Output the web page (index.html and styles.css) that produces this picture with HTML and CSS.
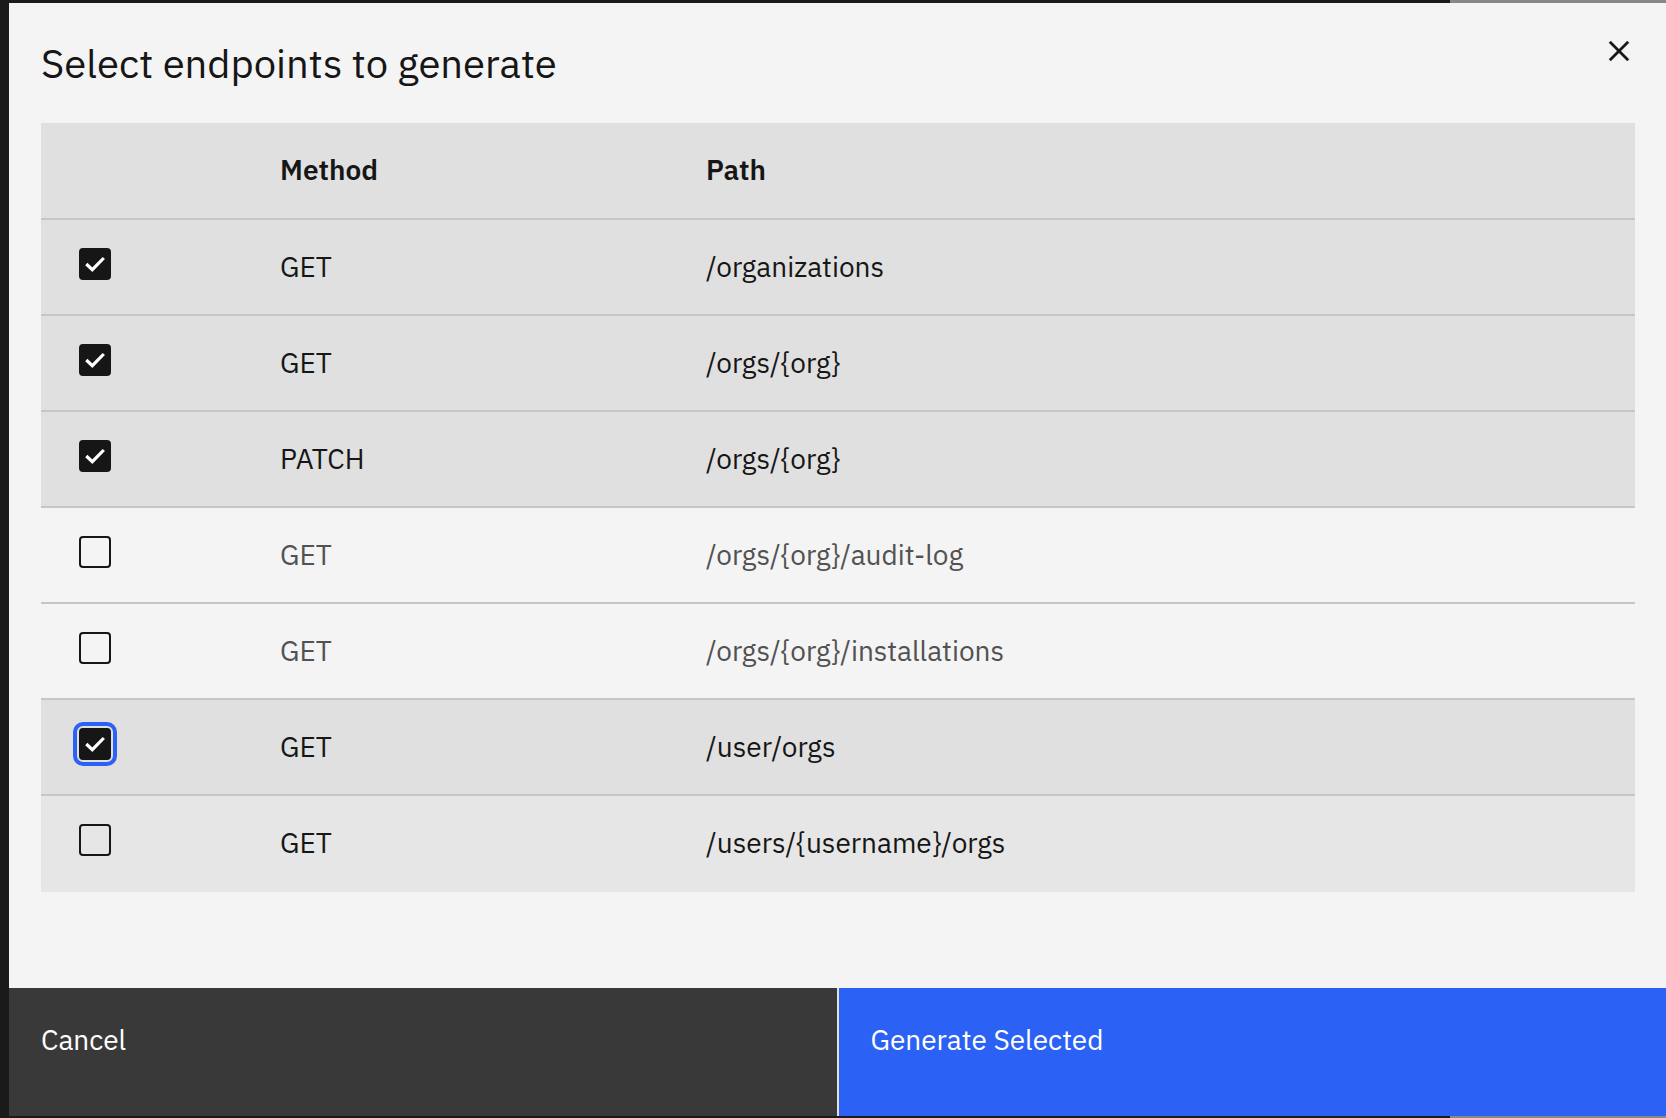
FILE: index.html
```html
<!DOCTYPE html>
<html lang="en">
<head>
<meta charset="utf-8">
<title>Select endpoints to generate</title>
<link rel="stylesheet" href="styles.css">
</head>
<body>
<svg class="sprite" aria-hidden="true">
  <symbol id="check" viewBox="0 0 32 32"><path d="M7.3 16 13.3 21.7 24.8 10" fill="none" stroke="#fff" stroke-width="3.2"/></symbol>
</svg>
<main class="modal" role="dialog" aria-labelledby="modal-title">
  <header class="modal-header">
    <h1 class="modal-title" id="modal-title">Select endpoints to generate</h1>
    <button class="close" type="button" aria-label="Close">
      <svg class="close-icon" viewBox="0 0 32 32" aria-hidden="true"><path fill="currentColor" stroke="currentColor" stroke-width=".3" d="M24 9.4 22.6 8 16 14.6 9.4 8 8 9.4 14.6 16 8 22.6 9.4 24 16 17.4 22.6 24 24 22.6 17.4 16z"/></svg>
    </button>
  </header>
  <div class="modal-content">
    <table class="endpoints">
      <thead>
        <tr><th class="col-select"></th><th class="col-method" scope="col">Method</th><th scope="col">Path</th></tr>
      </thead>
      <tbody>
        <tr class="selected">
          <td><label class="check"><input type="checkbox" aria-label="GET /organizations" checked><svg aria-hidden="true"><use href="#check"/></svg></label></td>
          <td>GET</td><td>/organizations</td>
        </tr>
        <tr class="selected">
          <td><label class="check"><input type="checkbox" aria-label="GET /orgs/{org}" checked><svg aria-hidden="true"><use href="#check"/></svg></label></td>
          <td>GET</td><td>/orgs/{org}</td>
        </tr>
        <tr class="selected">
          <td><label class="check"><input type="checkbox" aria-label="PATCH /orgs/{org}" checked><svg aria-hidden="true"><use href="#check"/></svg></label></td>
          <td>PATCH</td><td>/orgs/{org}</td>
        </tr>
        <tr>
          <td><label class="check"><input type="checkbox" aria-label="GET /orgs/{org}/audit-log"><svg aria-hidden="true"><use href="#check"/></svg></label></td>
          <td>GET</td><td>/orgs/{org}/audit-log</td>
        </tr>
        <tr>
          <td><label class="check"><input type="checkbox" aria-label="GET /orgs/{org}/installations"><svg aria-hidden="true"><use href="#check"/></svg></label></td>
          <td>GET</td><td>/orgs/{org}/installations</td>
        </tr>
        <tr class="selected">
          <td><label class="check focused"><input type="checkbox" aria-label="GET /user/orgs" checked><svg aria-hidden="true"><use href="#check"/></svg></label></td>
          <td>GET</td><td>/user/orgs</td>
        </tr>
        <tr class="hovered">
          <td><label class="check"><input type="checkbox" aria-label="GET /users/{username}/orgs"><svg aria-hidden="true"><use href="#check"/></svg></label></td>
          <td>GET</td><td>/users/{username}/orgs</td>
        </tr>
      </tbody>
    </table>
  </div>
  <footer class="modal-footer">
    <button class="action secondary" type="button">Cancel</button>
    <button class="action primary" type="button">Generate Selected</button>
  </footer>
</main>
</body>
</html>
```
FILE: styles.css
```css
* {
  box-sizing: border-box;
}

body {
  margin: 0;
  min-height: 100vh;
  padding: 3px 0 2px 9px;
  display: flex;
  flex-direction: column;
  font-family: "IBM Plex Sans", "Open Sans", sans-serif;
  font-size: 28px;
  line-height: 36px;
  color: #161616;
  background: linear-gradient(to right, #1a1a1a calc(100% - 216px), #888 calc(100% - 216px));
}

.sprite {
  display: none;
}

.modal {
  flex: 1;
  display: flex;
  flex-direction: column;
  background: #f4f4f4;
}

.modal-header {
  display: flex;
  justify-content: space-between;
  align-items: flex-start;
  padding-left: 32px;
}

.modal-title {
  margin: 0;
  padding: 32px 0;
  font-size: 40px;
  font-weight: 400;
  line-height: 56px;
}

.close {
  display: grid;
  place-items: center;
  width: 94px;
  height: 96px;
  padding: 0;
  border: 0;
  background: none;
  color: inherit;
}

.close-icon {
  width: 40px;
  height: 40px;
}

.modal-content {
  flex: 1;
  padding: 0 31px 48px 32px;
}

.endpoints {
  width: 100%;
  table-layout: fixed;
  border-collapse: separate;
  border-spacing: 0;
  text-align: left;
}

.col-select {
  width: 207px;
}

.col-method {
  width: 426px;
}

.endpoints th,
.endpoints td {
  height: 96px;
  padding: 0 32px;
  border-bottom: 2px solid #c6c6c6;
}

.endpoints th {
  height: 97px;
  padding-bottom: 2px;
  background: #e0e0e0;
  font-weight: 600;
}

.endpoints td {
  color: #525252;
}

.endpoints .selected td {
  background: #e0e0e0;
  color: #161616;
}

.endpoints .hovered td {
  background: #e6e6e6;
  border-color: #e6e6e6;
  color: #161616;
}

.endpoints td:first-child {
  padding: 28px 38px 0;
  vertical-align: top;
}

.check {
  display: grid;
  width: 32px;
  height: 32px;
}

.check input,
.check svg {
  grid-area: 1 / 1;
  width: 32px;
  height: 32px;
  margin: 0;
}

.check input {
  appearance: none;
  border: 2px solid #161616;
  border-radius: 4px;
}

.check input:checked {
  background: #161616;
}

.check svg {
  visibility: hidden;
  pointer-events: none;
}

.check input:checked + svg {
  visibility: visible;
}

.check.focused input {
  outline: 4px solid #2c61f5;
  outline-offset: 2px;
}

.modal-footer {
  display: flex;
  gap: 2px;
  background: #e0e0e0;
}

.action {
  flex: 1;
  height: 128px;
  padding: 34px 32px 58px;
  border: 0;
  font: inherit;
  text-align: left;
  color: #fff;
}

.secondary {
  background: #393939;
}

.primary {
  background: #2c61f5;
}
```
